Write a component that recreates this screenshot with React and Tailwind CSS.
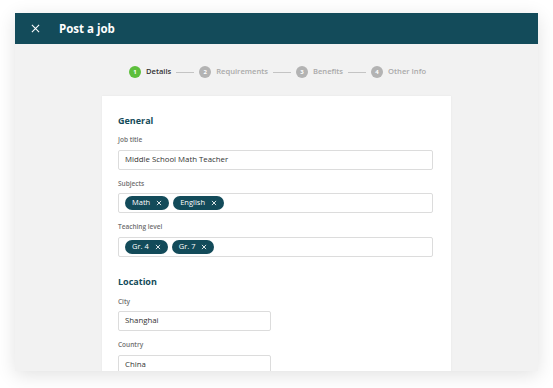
import React from "react";

const steps = [
  { n: 1, label: "Details", active: true },
  { n: 2, label: "Requirements" },
  { n: 3, label: "Benefits" },
  { n: 4, label: "Other Info" },
];

const Chip = ({ children }) => (
  <span className="flex items-center gap-[6px] h-[14px] px-[7px] rounded-full bg-[#134b5a] text-white text-[7.5px] font-medium">
    {children}
    <svg width="6" height="6" viewBox="0 0 10 10" stroke="currentColor" strokeWidth="1.4" fill="none">
      <path d="M1.5 1.5l7 7M8.5 1.5l-7 7" />
    </svg>
  </span>
);

const Field = ({ label, children, narrow, className = "mt-[11px]" }) => (
  <div className={className}>
    <div className="text-[6.5px] font-semibold text-[#6f6f6f] leading-none">{label}</div>
    <div
      className={`mt-[6px] h-[20px] flex items-center gap-[4px] px-[6px] border border-[#dcdcdc] rounded-[2px] bg-white ${
        narrow ? "w-[153px]" : "w-full"
      }`}
    >
      {children}
    </div>
  </div>
);

const Value = ({ children }) => (
  <span className="text-[7.8px] text-[#333] font-medium">{children}</span>
);

export default function App() {
  return (
    <div
      className="w-[553px] h-[388px] bg-white pt-[13px] pl-[15px] overflow-hidden"
      style={{ fontFamily: "'Open Sans', 'Liberation Sans', sans-serif" }}
    >
      <div className="w-[523px] h-[358px] bg-[#f2f2f2] overflow-hidden shadow-[0_4px_18px_rgba(0,0,0,0.12)] flex flex-col">
        <div className="h-[31px] shrink-0 bg-[#134b5a] flex items-center pl-[16px]">
          <svg width="9" height="9" viewBox="0 0 10 10" stroke="white" strokeWidth="1.2" fill="none">
            <path d="M1 1l8 8M9 1l-8 8" />
          </svg>
          <span className="ml-[19px] text-white text-[11.5px] font-bold">Post a job</span>
        </div>

        <div className="flex items-center justify-center h-[52px] shrink-0 pl-[2px] pt-[4px]">
          {steps.map((s, i) => (
            <React.Fragment key={s.n}>
              {i > 0 && <div className="w-[18px] h-px bg-[#c4c4c4] mx-[5px]" />}
              <div className="flex items-center gap-[5px]">
                <span
                  className={`w-[12px] h-[12px] rounded-full flex items-center justify-center text-white text-[6px] font-bold ${
                    s.active ? "bg-[#5dbf3c]" : "bg-[#b3b3b3]"
                  }`}
                >
                  {s.n}
                </span>
                <span
                  className={`text-[7.6px] font-semibold ${
                    s.active ? "text-[#333]" : "text-[#aaaaaa]"
                  }`}
                >
                  {s.label}
                </span>
              </div>
            </React.Fragment>
          ))}
        </div>

        <div className="ml-[87px] w-[349px] flex-1 bg-white pl-[16px] pr-[18px] pt-[20px] shadow-[0_0_2px_rgba(0,0,0,0.06)]">
          <div className="text-[9px] font-bold text-[#134b5a] leading-none">General</div>
          <Field label="Job title" className="mt-[12px]">
            <Value>Middle School Math Teacher</Value>
          </Field>
          <Field label="Subjects" className="mt-[11px]">
            <Chip>Math</Chip>
            <Chip>English</Chip>
          </Field>
          <Field label="Teaching level" className="mt-[11px]">
            <Chip>Gr. 4</Chip>
            <Chip>Gr. 7</Chip>
          </Field>

          <div className="mt-[20px] text-[9px] font-bold text-[#134b5a] leading-none">Location</div>
          <Field label="City" className="mt-[13px]" narrow>
            <Value>Shanghai</Value>
          </Field>
          <Field label="Country" className="mt-[11px]" narrow>
            <Value>China</Value>
          </Field>
        </div>
      </div>
    </div>
  );
}
